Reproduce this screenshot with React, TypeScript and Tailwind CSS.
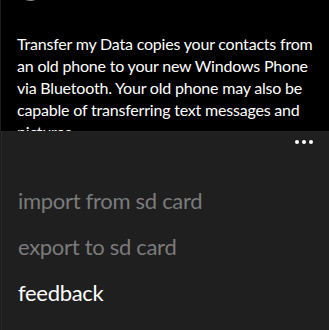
import React from "react";

export default function App() {
  const font = { fontFamily: 'Lato, "Noto Sans", sans-serif' };
  return (
    <div className="relative w-[329px] h-[330px] overflow-hidden bg-black border-l border-[#1c1c1c]" style={font}>
      <div className="h-[20px] overflow-hidden relative">
        <div className="absolute left-[13px] top-[-69px] text-[66px] leading-[66px] font-light tracking-[2px] text-white whitespace-nowrap">
          get my data
        </div>
      </div>
      <p className="pl-[16px] pr-[10px] pt-[13px] text-[16px] leading-[22px] tracking-[-0.2px] text-white">
        Transfer my Data copies your contacts from an old phone to your new Windows Phone via Bluetooth. Your old phone may also be capable of transferring text messages and pictures.
      </p>
      <div className="absolute left-0 right-0 top-[131px] bottom-0 bg-[#1f1f1f] border-l border-[#2b2b2b]">
        <div className="flex justify-end gap-[3px] pr-[16px] pt-[9px]">
          <span className="w-[4px] h-[4px] rounded-full bg-white" />
          <span className="w-[4px] h-[4px] rounded-full bg-white" />
          <span className="w-[4px] h-[4px] rounded-full bg-white" />
        </div>
        <div className="flex flex-col pl-[16px] pt-[41px] gap-[14px] text-[22px] leading-[32px] tracking-[-0.3px]">
          <span className="text-[#7b7b7b]">import from sd card</span>
          <span className="text-[#7b7b7b]">export to sd card</span>
          <span className="text-white">feedback</span>
        </div>
      </div>
    </div>
  );
}
